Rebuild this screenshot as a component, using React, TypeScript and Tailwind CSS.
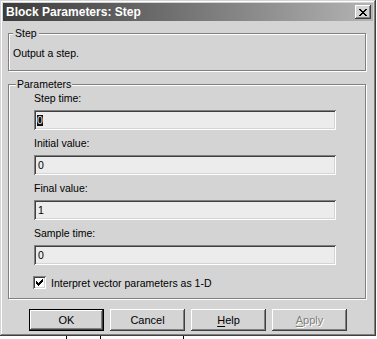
import React from "react";

const raised =
  "shadow-[inset_-1px_-1px_0_#404040,inset_1px_1px_0_#ffffff,inset_-2px_-2px_0_#808080,inset_2px_2px_0_#d4d4d4]";
const sunken =
  "shadow-[inset_1px_1px_0_#808080,inset_-1px_-1px_0_#ffffff,inset_2px_2px_0_#404040,inset_-2px_-2px_0_#d4d4d4]";
const etched = "border border-[#808080] shadow-[1px_1px_0_#ffffff,inset_1px_1px_0_#ffffff]";

function Field({ label, value, selected }: { label: string; value: string; selected?: boolean }) {
  return (
    <div className="flex flex-col">
      <div className="h-[12px] leading-[12px] pl-[1px]">{label}</div>
      <div className={`mt-[6px] ml-[1px] w-[302px] h-[20px] bg-[#ececec] ${sunken} flex items-center pl-[3px]`}>
        {selected ? (
          <span className="bg-[#111111] text-[#e6e6e6] leading-[11px] h-[11px]">{value}</span>
        ) : (
          <span className="leading-[12px] pl-[1px]">{value}</span>
        )}
      </div>
    </div>
  );
}

function Button({ children, isDefault, disabled }: { children: React.ReactNode; isDefault?: boolean; disabled?: boolean }) {
  return (
    <div
      className={`w-[75px] h-[22px] flex items-center justify-center ${
        isDefault ? "border border-black" : ""
      } ${disabled ? "text-[#808080] [text-shadow:1px_1px_0_#ffffff]" : ""}`}
    >
      <div className={`w-full h-full flex items-center justify-center ${raised} text-[11px]`}>{children}</div>
    </div>
  );
}

export default function App() {
  return (
    <div className="w-[377px] h-[339px] bg-white text-black text-[10.5px] font-['Liberation_Sans',Arial,sans-serif]">
      <div
        className={`w-[376px] h-[336px] bg-[#d4d4d4] p-[3px] flex flex-col shadow-[inset_-1px_-1px_0_#404040,inset_1px_1px_0_#d4d4d4,inset_-2px_-2px_0_#808080,inset_2px_2px_0_#ffffff]`}
      >
        {/* Title bar */}
        <div className="h-[18px] bg-gradient-to-r from-[#3c3c3c] to-[#b4b4b4] flex items-center justify-between pl-[3px] pr-[2px]">
          <span className="text-white font-bold text-[12px] leading-[14px]">Block Parameters: Step</span>
          <div className={`w-[16px] h-[14px] bg-[#d4d4d4] ${raised} flex items-center justify-center`}>
            <svg width="8" height="7" viewBox="0 0 8 7" shapeRendering="crispEdges">
              <path
                d="M0 0h2v1H0zM6 0h2v1H6zM1 1h2v1H1zM5 1h2v1H5zM2 2h4v1H2zM3 3h2v1H3zM2 4h4v1H2zM1 5h2v1H1zM5 5h2v1H5zM0 6h2v1H0zM6 6h2v1H6z"
                fill="#000"
              />
            </svg>
          </div>
        </div>

        {/* Step group */}
        <div className={`relative mt-[12px] ml-[5px] w-[358px] h-[38px] ${etched}`}>
          <span className="absolute -top-[7px] left-[4px] px-[2px] bg-[#d4d4d4] leading-[12px]">Step</span>
          <div className="pt-[13px] pl-[4px] leading-[12px]">Output a step.</div>
        </div>

        {/* Parameters group */}
        <div className={`relative mt-[13px] ml-[5px] w-[358px] h-[215px] ${etched}`}>
          <span className="absolute -top-[7px] left-[7px] px-[1px] bg-[#d4d4d4] leading-[12px]">Parameters</span>
          <div className="pt-[7px] pl-[24px] flex flex-col gap-[7px]">
            <Field label="Step time:" value="0" selected />
            <Field label="Initial value:" value="0" />
            <Field label="Final value:" value="1" />
            <Field label="Sample time:" value="0" />
          </div>
          <div className="mt-[11px] pl-[24px] flex items-center h-[13px]">
            <div className={`w-[13px] h-[13px] bg-white ${sunken} flex items-center justify-center`}>
              <svg width="7" height="7" viewBox="0 0 7 7" shapeRendering="crispEdges">
                <path
                  d="M6 0h1v1H6zM5 1h2v1H5zM0 2h1v1H0zM4 2h3v1H4zM0 3h2v1H0zM3 3h3v1H3zM0 4h5v1H0zM1 5h3v1H1zM2 6h1v1H2z"
                  fill="#000"
                />
              </svg>
            </div>
            <span className="ml-[5px] leading-[12px]">Interpret vector parameters as 1-D</span>
          </div>
        </div>

        {/* Buttons */}
        <div className="mt-[10px] flex justify-center gap-[6px]">
          <Button isDefault>OK</Button>
          <Button>Cancel</Button>
          <Button>
            <span>
              <span className="underline underline-offset-[2px]">H</span>elp
            </span>
          </Button>
          <Button disabled>
            <span>
              <span className="underline underline-offset-[2px]">A</span>pply
            </span>
          </Button>
        </div>
      </div>
      <div className="relative h-[3px]">
        <div className="absolute left-[66px] top-0 w-px h-[3px] bg-black" />
        <div className="absolute left-[100px] top-0 w-px h-[3px] bg-black" />
        <div className="absolute left-[183px] top-0 w-px h-[3px] bg-black" />
      </div>
    </div>
  );
}
